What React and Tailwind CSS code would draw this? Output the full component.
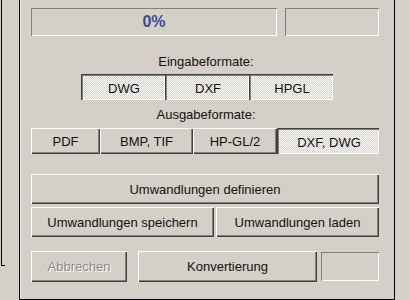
import React from "react";

const raised =
  "shadow-[inset_1px_1px_#ffffff,inset_-1px_-1px_#404040,inset_-2px_-2px_#808080] bg-[#d4d0c8]";
const pressed =
  "shadow-[inset_1px_1px_#404040,inset_2px_2px_#808080,inset_-1px_-1px_#ffffff] bg-[#d4d0c8] bg-[image:repeating-conic-gradient(#ffffff_0%_25%,#d4d0c8_0%_50%)] bg-[length:2px_2px]";
const sunken = "shadow-[inset_1px_1px_#808080,inset_-1px_-1px_#ffffff] bg-[#d4d0c8]";

function Btn({ w, h, children, on, disabled, className = "" }) {
  return (
    <div
      className={`${on ? pressed : raised} ${w} ${h} shrink-0 flex items-center justify-center text-[13px] leading-[15px] ${
        disabled ? "text-[#8c8a86] [text-shadow:1px_1px_#ffffff]" : "text-[#111111]"
      } ${className}`}
    >
      <span className={on ? "translate-x-px translate-y-px" : ""}>{children}</span>
    </div>
  );
}

export default function App() {
  return (
    <div className="w-[409px] h-[300px] bg-[#d4d0c8] flex font-['Liberation_Sans',Arial,sans-serif] overflow-hidden select-none">
      {/* left strip */}
      <div className="w-[19px] h-full shrink-0 pl-px">
        <div className="w-[4px] h-[266px] border-l border-b border-black" />
      </div>

      {/* main panel */}
      <div className="w-[376px] h-[300px] shrink-0 border-l border-r border-b border-black">
        <div className="h-full border-l border-[#ecebe8] pl-[10px] pr-[14px] pt-[8px] flex flex-col">
          {/* progress row */}
          <div className="flex gap-[8px] h-[28px]">
            <div className={`${sunken} w-[246px] h-full flex items-center justify-center`}>
              <span className="text-[16px] font-bold text-[#3b4a92] leading-none">0%</span>
            </div>
            <div className={`${sunken} w-[94px] h-full`} />
          </div>

          <div className="mt-[18px] h-[15px] text-[13px] leading-[15px] text-[#111111] text-center pl-[1px]">
            Eingabeformate:
          </div>

          <div className="mt-[5px] flex pl-[50px]">
            <Btn w="w-[84px]" h="h-[26px]" on>DWG</Btn>
            <Btn w="w-[84px]" h="h-[26px]" on>DXF</Btn>
            <Btn w="w-[84px]" h="h-[26px]" on>HPGL</Btn>
          </div>

          <div className="mt-[7px] h-[15px] text-[13px] leading-[15px] text-[#111111] text-center pl-[1px]">
            Ausgabeformate:
          </div>

          <div className="mt-[6px] flex">
            <Btn w="w-[69px]" h="h-[26px]">PDF</Btn>
            <Btn w="w-[93px]" h="h-[26px]">BMP, TIF</Btn>
            <Btn w="w-[84px]" h="h-[26px]">HP-GL/2</Btn>
            <Btn w="w-[102px]" h="h-[26px]" on>DXF, DWG</Btn>
          </div>

          <div className="mt-[20px] flex">
            <Btn w="w-[348px]" h="h-[30px]">Umwandlungen definieren</Btn>
          </div>

          <div className="mt-[3px] flex gap-[2px]">
            <Btn w="w-[183px]" h="h-[30px]">Umwandlungen speichern</Btn>
            <Btn w="w-[163px]" h="h-[30px]">Umwandlungen laden</Btn>
          </div>

          <div className="mt-[14px] flex items-center">
            <Btn w="w-[96px]" h="h-[31px]" disabled>Abbrechen</Btn>
            <Btn w="w-[179px]" h="h-[31px]" className="ml-[11px]">Konvertierung</Btn>
            <div className={`${sunken} ml-[4px] w-[58px] h-[29px] shrink-0`} />
          </div>
        </div>
      </div>

      {/* right strip */}
      <div className="flex-1 h-full" />
    </div>
  );
}
